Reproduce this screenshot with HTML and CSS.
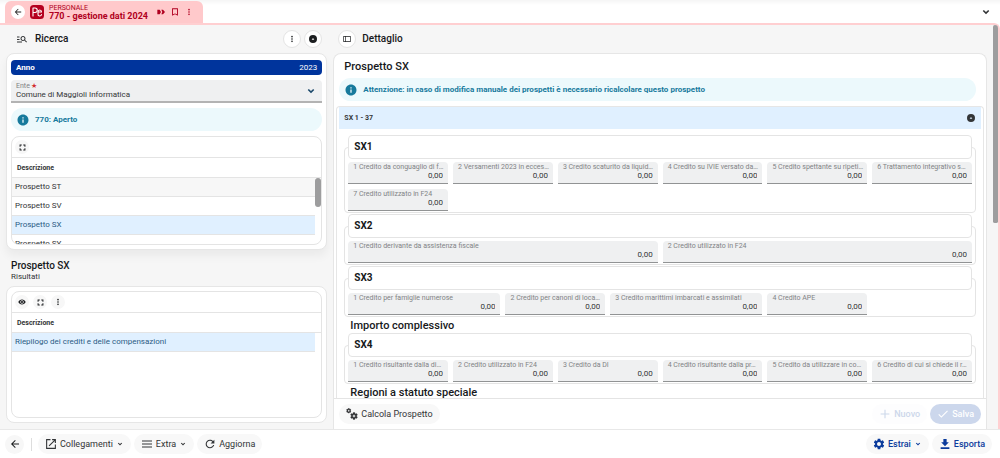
FILE: index.html
```html
<!DOCTYPE html>
<html lang="it">
<head>
<meta charset="utf-8">
<meta name="viewport" content="width=device-width, initial-scale=1">
<title>770 - gestione dati 2024</title>
<link rel="stylesheet" href="styles.css">
</head>
<body>
<svg class="sprite" aria-hidden="true">
  <symbol id="back" viewBox="2 2 20 20"><path d="M20 11H7.83l5.59-5.59L12 4l-8 8 8 8 1.41-1.41L7.83 13H20z"/></symbol>
  <symbol id="search" viewBox="0 0 24 24"><path d="M7 9H2V7h5v2zm0 3H2v2h5v-2zm13.59 7l-3.83-3.83c-.8.52-1.74.83-2.76.83-2.76 0-5-2.24-5-5s2.24-5 5-5 5 2.24 5 5c0 1.02-.31 1.96-.83 2.75L22 17.59 20.59 19zM17 11c0-1.65-1.35-3-3-3s-3 1.35-3 3 1.35 3 3 3 3-1.35 3-3zM2 19h10v-2H2v2z"/></symbol>
  <symbol id="more" viewBox="0 0 24 24"><circle cx="12" cy="5" r="2.4"/><circle cx="12" cy="12" r="2.4"/><circle cx="12" cy="19" r="2.4"/></symbol>
  <symbol id="info" viewBox="0 0 24 24"><path d="M12 1C5.900 1 1 5.900 1 12s4.900 11 11 11 11-4.900 11-11S18.100 1 12 1zm1.300 16.500h-2.600V11h2.600v6.500zm0-8.500h-2.600V6.400h2.600V9z"/></symbol>
  <symbol id="full" viewBox="3 3 18 18"><path d="M7 14H4.500v5.500H10V17H7v-3zm-2.500-4H7V7h3V4.500H4.500V10zM17 17h-3v2.500h5.500V14H17v3zM14 4.500V7h3v3h2.500V4.500H14z"/></symbol>
  <symbol id="eye" viewBox="0 0 24 24"><path d="M12 4.500C7 4.500 2.730 7.610 1 12c1.730 4.390 6 7.500 11 7.500s9.270-3.110 11-7.500c-1.730-4.390-6-7.500-11-7.500zM12 17c-2.760 0-5-2.240-5-5s2.240-5 5-5 5 2.240 5 5-2.240 5-5 5zm0-8c-1.660 0-3 1.340-3 3s1.340 3 3 3 3-1.340 3-3-1.340-3-3-3z"/></symbol>
  <symbol id="up" viewBox="0 0 24 24"><path fill-rule="evenodd" d="M12 0a12 12 0 1 0 0 24 12 12 0 0 0 0-24zM12 9l4 5.500H8z"/></symbol>
  <symbol id="chevron" viewBox="0 0 24 24"><path d="M16.300 7.900L12 12.200 7.700 7.900 5.500 10l6.500 6.500 6.500-6.500z"/></symbol>
  <symbol id="open" viewBox="1 1 22 22"><path d="M19 19H5V5h6V3H3v18h18v-8h-2v6zM14 3v2h3.590l-9.830 9.830 1.410 1.410L19 6.410V10h2V3h-7z"/></symbol>
  <symbol id="menu" viewBox="0 0 24 24"><path d="M2 19h20v-2.200H2V19zm0-5.900h20v-2.200H2v2.200zM2 5v2.200h20V5H2z"/></symbol>
  <symbol id="refresh" viewBox="1 1 22 22"><path d="M17.650 6.350C16.200 4.900 14.210 4 12 4c-4.420 0-7.990 3.580-7.990 8s3.570 8 7.990 8c3.730 0 6.840-2.550 7.730-6h-2.080c-.82 2.330-3.040 4-5.650 4-3.310 0-6-2.690-6-6s2.690-6 6-6c1.660 0 3.140.69 4.220 1.780L13 11h7V4l-2.350 2.350z"/></symbol>
  <symbol id="gear" viewBox="1 1 22 22"><path d="M19.140 12.940c.04-.3.060-.61.060-.94s-.02-.64-.07-.94l2.030-1.580c.18-.14.230-.41.120-.61l-1.920-3.320c-.12-.22-.37-.29-.59-.22l-2.390.96c-.5-.38-1.030-.7-1.620-.94l-.36-2.540c-.04-.24-.24-.41-.48-.41h-3.840c-.24 0-.43.17-.47.41l-.36 2.540c-.59.24-1.130.57-1.620.94l-2.390-.96c-.22-.08-.47 0-.59.22L2.740 8.870c-.12.21-.08.47.12.61l2.030 1.580c-.05.3-.09.63-.09.94s.02.64.07.94l-2.030 1.580c-.18.14-.23.41-.12.61l1.920 3.320c.12.22.37.29.59.22l2.390-.96c.5.38 1.030.7 1.620.94l.36 2.540c.05.24.24.41.48.41h3.840c.24 0 .44-.17.47-.41l.36-2.540c.59-.24 1.130-.56 1.620-.94l2.390.96c.22.08.47 0 .59-.22l1.920-3.320c.12-.22.070-.47-.12-.61l-2.010-1.580zM12 15.600c-1.980 0-3.600-1.620-3.600-3.600s1.620-3.600 3.600-3.600 3.600 1.620 3.600 3.600-1.620 3.600-3.600 3.600z"/></symbol>
  <symbol id="gears" viewBox="0 0 24 24"><g stroke="currentColor" stroke-width="1"><use href="#gear" x="0" y="0" width="11" height="11"/><use href="#gear" x="8" y="8" width="16" height="16"/></g></symbol>
  <symbol id="download" viewBox="1 1 22 22"><path d="M19 9h-4V3H9v6H5l7 7 7-7zM4 18v3h16v-3H4z"/></symbol>
  <symbol id="plus" viewBox="1 1 22 22"><path d="M20 13h-7v7h-2v-7H4v-2h7V4h2v7h7z"/></symbol>
  <symbol id="check" viewBox="1 1 22 22"><path d="M9 16.170L4.830 12l-1.420 1.410L9 19 21 7l-1.410-1.410z"/></symbol>
  <symbol id="mark" viewBox="1 1 22 22"><path d="M20 2H4v20l8-3.500 8 3.500V2zm-2.500 16.500L12 16l-5.500 2.500v-14h11v14z"/></symbol>
  <symbol id="split" viewBox="0 0 24 24"><path fill-rule="evenodd" d="M1 3h22v18H1zM3 5v14h4V5zm6 0v14h12V5z"/></symbol>
  <symbol id="next" viewBox="0 0 24 24"><path d="M1 5h7l4 7-4 7H1zM13 5h5l6 7-6 7h-5l3-7z"/></symbol>
</svg>

<header class="topbar">
  <div class="tab">
    <button class="round tab-back" aria-label="Indietro"><svg class="icon"><use href="#back"/></svg></button>
    <svg class="logo" viewBox="0 0 28 28" aria-hidden="true">
      <rect width="28" height="28" rx="7" fill="#b5001f"/>
      <g fill="none" stroke="#fff" stroke-width="2.200" stroke-linecap="round" stroke-linejoin="round">
        <path d="M6 22V6h4a4.500 4.500 0 0 1 0 9H6"/>
        <path d="M17 14h6a3.500 4 0 0 0-7 0v4a3.500 3.500 0 0 0 7 1"/>
      </g>
    </svg>
    <div class="tab-text"><span class="tab-area">PERSONALE</span><strong class="tab-title">770 - gestione dati 2024</strong></div>
    <button class="tab-tool" aria-label="Avanti"><svg class="icon"><use href="#next"/></svg></button>
    <button class="tab-tool" aria-label="Segnalibro"><svg class="icon"><use href="#mark"/></svg></button>
    <button class="tab-tool" aria-label="Altro"><svg class="icon"><use href="#more"/></svg></button>
  </div>
  <button class="tab-list" aria-label="Elenco schede"><svg class="icon icon-l"><use href="#chevron"/></svg></button>
</header>

<main class="workspace">
  <section class="column">
    <div class="column-head">
      <svg class="icon icon-l head-icon"><use href="#search"/></svg>
      <h2 class="heading grow">Ricerca</h2>
      <button class="round outlined" aria-label="Opzioni"><svg class="icon"><use href="#more"/></svg></button>
      <button class="round outlined" aria-label="Comprimi"><svg class="icon"><use href="#up"/></svg></button>
    </div>
    <div class="card search-card">
      <div class="year"><strong>Anno</strong><span>2023</span></div>
      <div class="select-field">
        <label class="field-label" for="ente">Ente<span class="required">★</span></label>
        <select class="select" id="ente"><option>Comune di Maggioli Informatica</option></select>
        <svg class="icon icon-l select-arrow"><use href="#chevron"/></svg>
      </div>
      <p class="notice"><svg class="icon icon-l"><use href="#info"/></svg>770: Aperto</p>
      <div class="grid-panel grid-short">
        <div class="grid-tools"><button class="round" aria-label="Schermo intero"><svg class="icon icon-s"><use href="#full"/></svg></button></div>
        <table class="grid">
          <colgroup><col><col class="gutter-col"></colgroup>
          <thead><tr><th colspan="2">Descrizione</th></tr></thead>
          <tbody>
            <tr class="alt"><td>Prospetto ST</td><td class="gutter"></td></tr>
            <tr><td>Prospetto SV</td><td class="gutter"></td></tr>
            <tr class="selected"><td>Prospetto SX</td><td class="gutter"></td></tr>
            <tr><td>Prospetto SY</td><td class="gutter"></td></tr>
          </tbody>
        </table>
        <div class="thumb grid-thumb"></div>
      </div>
    </div>
    <div class="result-head"><h2 class="heading">Prospetto SX</h2><p class="sub">Risultati</p></div>
    <div class="card result-card">
      <div class="grid-panel grow">
        <div class="grid-tools">
          <button class="round" aria-label="Visualizza"><svg class="icon"><use href="#eye"/></svg></button>
          <button class="round" aria-label="Schermo intero"><svg class="icon icon-s"><use href="#full"/></svg></button>
          <button class="round" aria-label="Altro"><svg class="icon"><use href="#more"/></svg></button>
        </div>
        <table class="grid">
          <colgroup><col><col class="gutter-col"></colgroup>
          <thead><tr><th colspan="2">Descrizione</th></tr></thead>
          <tbody><tr class="selected"><td>Riepilogo dei crediti e delle compensazioni</td><td class="gutter"></td></tr></tbody>
        </table>
      </div>
    </div>
  </section>

  <section class="column">
    <div class="column-head detail-head">
      <button class="round outlined" aria-label="Pannello"><svg class="icon"><use href="#split"/></svg></button>
      <h2 class="heading">Dettaglio</h2>
    </div>
    <div class="card detail-card">
      <div class="detail-scroll">
        <h2 class="heading detail-title">Prospetto SX</h2>
        <p class="notice detail-notice"><svg class="icon icon-l"><use href="#info"/></svg>Attenzione: in caso di modifica manuale dei prospetti è necessario ricalcolare questo prospetto</p>
        <div class="accordion">
          <button class="accordion-head"><span>SX 1 - 37</span><svg class="icon"><use href="#up"/></svg></button>
          <fieldset class="group">
            <legend class="legend">SX1</legend>
            <div class="fields">
              <div class="field"><label for="a1">1 Credito da conguaglio di f…</label><input id="a1" value="0,00" readonly></div>
              <div class="field"><label for="a2">2 Versamenti 2023 in ecces…</label><input id="a2" value="0,00" readonly></div>
              <div class="field"><label for="a3">3 Credito scaturito da liquid…</label><input id="a3" value="0,00" readonly></div>
              <div class="field"><label for="a4">4 Credito su IVIE versato da…</label><input id="a4" value="0,00" readonly></div>
              <div class="field"><label for="a5">5 Credito spettante su ripeti…</label><input id="a5" value="0,00" readonly></div>
              <div class="field"><label for="a6">6 Trattamento integrativo s…</label><input id="a6" value="0,00" readonly></div>
              <div class="field"><label for="a7">7 Credito utilizzato in F24</label><input id="a7" value="0,00" readonly></div>
            </div>
          </fieldset>
          <fieldset class="group">
            <legend class="legend">SX2</legend>
            <div class="fields">
              <div class="field half"><label for="b1">1 Credito derivante da assistenza fiscale</label><input id="b1" value="0,00" readonly></div>
              <div class="field half"><label for="b2">2 Credito utilizzato in F24</label><input id="b2" value="0,00" readonly></div>
            </div>
          </fieldset>
          <fieldset class="group">
            <legend class="legend">SX3</legend>
            <div class="fields">
              <div class="field quarter"><label for="c1">1 Credito per famiglie numerose</label><input id="c1" value="0,00" readonly></div>
              <div class="field"><label for="c2">2 Credito per canoni di loca…</label><input id="c2" value="0,00" readonly></div>
              <div class="field quarter"><label for="c3">3 Credito marittimi imbarcati e assimilati</label><input id="c3" value="0,00" readonly></div>
              <div class="field"><label for="c4">4 Credito APE</label><input id="c4" value="0,00" readonly></div>
            </div>
          </fieldset>
          <h3 class="heading group-title">Importo complessivo</h3>
          <fieldset class="group">
            <legend class="legend">SX4</legend>
            <div class="fields">
              <div class="field"><label for="d1">1 Credito risultante dalla di…</label><input id="d1" value="0,00" readonly></div>
              <div class="field"><label for="d2">2 Credito utilizzato in F24</label><input id="d2" value="0,00" readonly></div>
              <div class="field"><label for="d3">3 Credito da DI</label><input id="d3" value="0,00" readonly></div>
              <div class="field"><label for="d4">4 Credito risultante dalla pr…</label><input id="d4" value="0,00" readonly></div>
              <div class="field"><label for="d5">5 Credito da utilizzare in co…</label><input id="d5" value="0,00" readonly></div>
              <div class="field"><label for="d6">6 Credito di cui si chiede il r…</label><input id="d6" value="0,00" readonly></div>
            </div>
          </fieldset>
          <h3 class="heading group-title">Regioni a statuto speciale</h3>
        </div>
      </div>
      <div class="detail-actions">
        <button class="pill"><svg class="icon icon-l"><use href="#gears"/></svg>Calcola Prospetto</button>
        <span class="grow"></span>
        <button class="pill muted" disabled><svg class="icon icon-l"><use href="#plus"/></svg>Nuovo</button>
        <button class="pill save" disabled><svg class="icon icon-l"><use href="#check"/></svg>Salva</button>
      </div>
    </div>
  </section>
  <div class="thumb page-thumb"></div>
</main>

<footer class="footer">
  <button class="round footer-back" aria-label="Indietro"><svg class="icon icon-m"><use href="#back"/></svg></button>
  <span class="divider"></span>
  <button class="pill"><svg class="icon icon-l"><use href="#open"/></svg>Collegamenti<svg class="icon"><use href="#chevron"/></svg></button>
  <button class="pill"><svg class="icon icon-l"><use href="#menu"/></svg>Extra<svg class="icon"><use href="#chevron"/></svg></button>
  <button class="pill"><svg class="icon icon-l"><use href="#refresh"/></svg>Aggiorna</button>
  <span class="grow"></span>
  <button class="pill blue"><svg class="icon icon-l"><use href="#gear"/></svg>Estrai<svg class="icon"><use href="#chevron"/></svg></button>
  <button class="pill blue"><svg class="icon icon-l"><use href="#download"/></svg>Esporta</button>
</footer>
</body>
</html>
```
FILE: styles.css
```css
* { box-sizing: border-box; }

body {
  margin: 0;
  height: 100vh;
  display: flex;
  flex-direction: column;
  overflow: hidden;
  background: #fff;
  color: #333537;
  font: 8px/10px Roboto, "Liberation Sans", sans-serif;
}

h2, h3, p { margin: 0; }
button, input, select { font: inherit; color: inherit; border: 0; margin: 0; padding: 0; background: none; }
.sprite { position: absolute; width: 0; height: 0; }
.grow { flex: 1; }
.icon { width: 8px; height: 8px; flex: none; fill: currentColor; }
.icon-s { width: 7px; height: 7px; }
.icon-m { width: 10px; height: 10px; }
.icon-l { width: 12px; height: 12px; }
.heading { font-size: 10px; line-height: 12px; font-weight: 500; color: #17191b; }

.round {
  width: 14px;
  height: 14px;
  border-radius: 50%;
  display: flex;
  align-items: center;
  justify-content: center;
  background: #f7f7f7;
  color: #1c1e20;
}
.outlined { width: 18px; height: 18px; background: #fff; border: 1px solid #e4e4e4; }

/* Tab bar */
.topbar {
  display: flex;
  align-items: flex-end;
  justify-content: space-between;
  height: 23px;
  padding: 0 8px 0 5px;
  background: linear-gradient(#f5f5f5, #fff 5px);
}
.tab {
  display: flex;
  align-items: center;
  height: 22px;
  padding: 0 7px 0 6px;
  border-radius: 6px 6px 0 0;
  background: #ffc9cb;
  color: #b00020;
}
.tab-back { background: #fff; color: #222; }
.logo { width: 14px; height: 14px; margin: 0 5px; }
.tab-text { display: flex; flex-direction: column; margin-right: 6px; }
.tab-area { font-size: 7px; line-height: 8px; }
.tab-title { font-size: 9px; line-height: 9px; font-weight: 700; }
.tab-tool { display: flex; width: 14px; justify-content: center; }
.tab-list { align-self: center; display: flex; }

/* Workspace */
.workspace {
  position: relative;
  flex: 1;
  min-height: 0;
  display: grid;
  grid-template-columns: 321fr 653fr;
  gap: 6px;
  padding: 0 11px 0 6px;
  border: solid #ffcfd1;
  border-width: 2px 2px 0 0;
  border-top-right-radius: 6px;
  background: #f6f6f6;
}
.column { display: flex; flex-direction: column; min-width: 0; min-height: 0; }
.column-head { display: flex; align-items: center; gap: 3px; height: 28px; padding: 0 5px; flex: none; }
.head-icon { margin: 0 4px 0 5px; }
.detail-head { gap: 6px; }
.card {
  display: flex;
  flex-direction: column;
  background: #fff;
  border: 1px solid #e6e6e6;
  border-radius: 8px;
}
.search-card { padding: 6px 4px 4px; gap: 5px; box-shadow: 0 6px 10px #0000000d; }
.year {
  display: flex;
  justify-content: space-between;
  padding: 3px 5px;
  line-height: 9px;
  border-radius: 4px;
  background: #00349c;
  color: #fff;
}
.select-field {
  position: relative;
  padding: 2px 5px 1px;
  background: #eff0f1;
  border-bottom: 2px solid #b3b3b3;
  border-radius: 4px 4px 0 0;
}
.field-label { display: block; font-size: 7px; line-height: 8px; color: #808284; }
.required { margin-left: 1px; color: #d32f2f; }
.select { display: block; width: 100%; height: 10px; appearance: none; }
.select-arrow { position: absolute; right: 5px; top: 5px; color: #1d4a6b; }
.notice {
  display: flex;
  align-items: center;
  gap: 6px;
  height: 23px;
  padding: 0 6px;
  border-radius: 12px;
  background: #ecf9fc;
  color: #177a9c;
  font-weight: 700;
}

/* Data grids */
.grid-panel {
  position: relative;
  overflow: hidden;
  border: 1px solid #e4e4e4;
  border-radius: 8px;
}
.grid-short { height: 109px; }
.grid-tools { display: flex; gap: 4px; height: 21px; padding: 3px; border-bottom: 1px solid #e4e4e4; }
.grid { width: 100%; border-collapse: separate; border-spacing: 0; table-layout: fixed; }
.gutter-col { width: 6px; }
.grid th {
  height: 20px;
  padding: 0 5px;
  border-bottom: 1px solid #e4e4e4;
  text-align: left;
  font-size: 7px;
  font-weight: 700;
}
.grid td { height: 19px; padding: 0 3px; border-bottom: 1px solid #e4e4e4; }
.grid tr .gutter { padding: 0; border: 0; background: none; }
.alt td { background: #f7f7f7; }
.selected td { background: #e0f0ff; color: #2b5c85; }
.thumb { position: absolute; border-radius: 3px; background: #9d9d9e; }
.grid-thumb { right: 0; top: 41px; width: 6px; height: 29px; }
.page-thumb { right: 0; top: 0; width: 5px; height: 49%; border-top-right-radius: 5px; }

.result-head { padding: 10px 5px 5px; }
.sub { line-height: 9px; }
.result-card { flex: 1; min-height: 0; margin-bottom: 6px; padding: 4px; }

/* Detail */
.detail-card { flex: 1; min-height: 0; overflow: hidden; border-radius: 8px 8px 0 0; border-bottom: 0; }
.detail-scroll { flex: 1; min-height: 0; overflow: hidden; padding: 0 2px; }
.detail-title { padding: 7px 8px 5px; font-size: 11px; }
.detail-notice { margin: 0 8px 5px 3px; }
.accordion { border: solid #e6e6e6; border-width: 1px 1px 0; border-radius: 4px 4px 0 0; padding: 0 2px; }
.accordion-head {
  display: flex;
  align-items: center;
  justify-content: space-between;
  width: 100%;
  height: 22px;
  margin-bottom: 6px;
  padding: 0 6px 0 5px;
  background: #e0f0ff;
  font-size: 7px;
  font-weight: 700;
}
.group { min-width: 0; margin: 0 5px 1px; padding: 0 3px 1px; border: 1px solid #e4e4e4; border-radius: 4px; }
.legend {
  width: 100%;
  padding: 5px;
  border: 1px solid #e4e4e4;
  border-radius: 4px;
  background: #fff;
  color: #17191b;
  font-size: 10px;
  line-height: 12px;
  font-weight: 700;
}
.fields { display: grid; grid-template-columns: repeat(12, 1fr); gap: 5px; padding-top: 3px; }
.field {
  grid-column: span 2;
  min-width: 0;
  padding: 1px 5px 2px;
  border-bottom: 1px solid #919394;
  border-radius: 4px 4px 0 0;
  background: #eff0f1;
}
.half { grid-column: span 6; }
.quarter { grid-column: span 3; }
.field label {
  display: block;
  white-space: nowrap;
  font-size: 7px;
  line-height: 8px;
  color: #818385;
}
.field input { display: block; width: 100%; height: 10px; text-align: right; }
.group-title { padding: 2px 11px 1px; font-size: 11px; }
.detail-actions { display: flex; align-items: center; gap: 3px; height: 31px; padding: 0 5px; border-top: 1px solid #e4e4e4; flex: none; }
.pill {
  display: flex;
  align-items: center;
  gap: 3px;
  height: 20px;
  padding: 0 7px;
  border-radius: 10px;
  background: #f8f8f8;
  font-size: 9px;
}
.muted { background: #fdfdfe; color: #ccd7ea; font-weight: 500; }
.save { background: #ccd7ec; color: #fff; font-weight: 500; }

/* Footer */
.footer { display: flex; align-items: center; gap: 3px; height: 29px; padding: 0 8px 0 5px; border-top: 1px solid #e8e8e8; }
.footer-back { width: 19px; height: 19px; }
.divider { width: 1px; height: 13px; margin: 0 3px 0 4px; background: #ddd; }
.blue { color: #0b3b9c; font-weight: 500; }
```
